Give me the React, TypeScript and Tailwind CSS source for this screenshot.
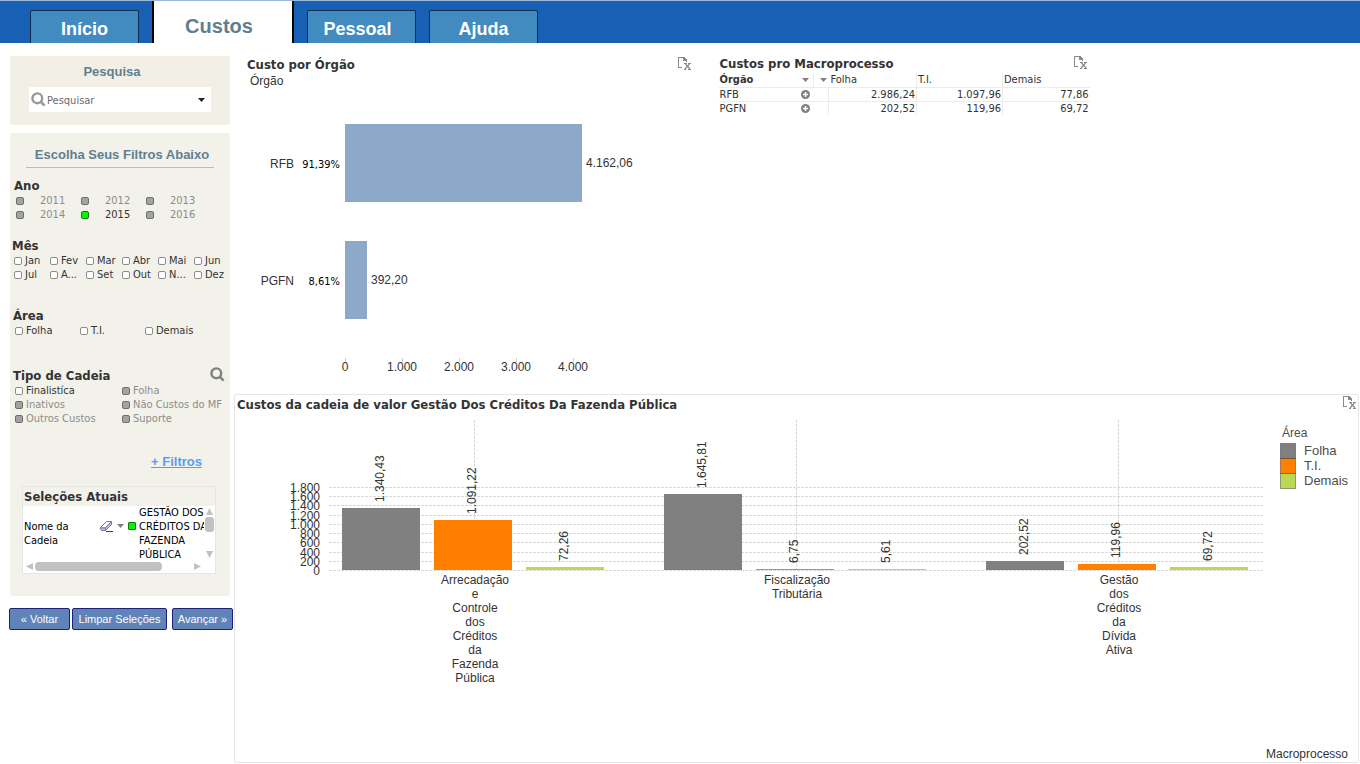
import React, { useState } from "react";

type FilterState = "free" | "selected" | "excluded";

const YEARS: { label: string; state: FilterState }[] = [
  { label: "2011", state: "excluded" },
  { label: "2012", state: "excluded" },
  { label: "2013", state: "excluded" },
  { label: "2014", state: "excluded" },
  { label: "2015", state: "selected" },
  { label: "2016", state: "excluded" },
];

const MONTHS = ["Jan", "Fev", "Mar", "Abr", "Mai", "Jun", "Jul", "A...", "Set", "Out", "N...", "Dez"];

const AREAS = ["Folha", "T.I.", "Demais"];

const CHAIN_TYPES: { label: string; state: FilterState }[] = [
  { label: "Finalistíca", state: "free" },
  { label: "Folha", state: "excluded" },
  { label: "Inativos", state: "excluded" },
  { label: "Não Custos do MF", state: "excluded" },
  { label: "Outros Custos", state: "excluded" },
  { label: "Suporte", state: "excluded" },
];

const ORGAOS = [
  { name: "RFB", percent: "91,39%", value: 4162.06, label: "4.162,06" },
  { name: "PGFN", percent: "8,61%", value: 392.2, label: "392,20" },
];

const TABLE_ROWS = [
  { name: "RFB", values: ["2.986,24", "1.097,96", "77,86"] },
  { name: "PGFN", values: ["202,52", "119,96", "69,72"] },
];

const COLORS = ["#808080", "#ff8000", "#bad854"];

const GROUPS = [
  {
    lines: ["Arrecadação", "e", "Controle", "dos", "Créditos", "da", "Fazenda", "Pública"],
    values: [1340.43, 1091.22, 72.26],
    labels: ["1.340,43", "1.091,22", "72,26"],
  },
  {
    lines: ["Fiscalização", "Tributária"],
    values: [1645.81, 6.75, 5.61],
    labels: ["1.645,81", "6,75", "5,61"],
  },
  {
    lines: ["Gestão", "dos", "Créditos", "da", "Dívida", "Ativa"],
    values: [202.52, 119.96, 69.72],
    labels: ["202,52", "119,96", "69,72"],
  },
];

const AXIS_TICKS = ["0", "200", "400", "600", "800", "1.000", "1.200", "1.400", "1.600", "1.800"];

const ExportButton: React.FC = () => (
  <button type="button" aria-label="Exportar para Excel" className="block shrink-0 pt-px">
    <svg width="15" height="14" viewBox="0 0 15 14" fill="none" stroke="#8a8a8a" shapeRendering="crispEdges">
      <path d="M4 10.5H0.5V0.5H6" />
      <path d="M5 0h2v1h1v1h1v2H5z" fill="#8a8a8a" stroke="none" />
      <path d="M8.500 4v1" />
      <path d="M6 6.500h3M10 6.500h3M6 12.500h2M10 12.500h3" />
      <path d="M7.500 7l4.500 5M11.500 7l-4.500 5" shapeRendering="auto" strokeWidth="1.2" />
    </svg>
  </button>
);

const SearchIcon: React.FC<{ color: string }> = ({ color }) => (
  <svg width="15" height="15" viewBox="0 0 15 15" fill="none" stroke={color}>
    <circle cx="6.3" cy="6.3" r="4.900" strokeWidth="2.400" />
    <path d="M9.800 9.800l3.800 3.800" strokeWidth="2.600" />
  </svg>
);

const Caret: React.FC<{ color: string }> = ({ color }) => (
  <svg width="7" height="4" viewBox="0 0 7 4" fill={color} className="shrink-0">
    <path d="M0 0h7L3.500 4z" />
  </svg>
);

const PlusIcon: React.FC = () => (
  <svg width="9" height="9" viewBox="0 0 9 9">
    <circle cx="4.500" cy="4.500" r="4.500" fill="#808080" />
    <path d="M4.500 2v5M2 4.500h5" stroke="#fff" strokeWidth="1.400" />
  </svg>
);

const Check: React.FC<{ label: string; state?: FilterState; wide?: boolean }> = ({
  label,
  state = "free",
  wide = false,
}) => {
  const [checked, setChecked] = useState(state === "selected");
  const box =
    state === "excluded"
      ? "border-[#6e6e6e] bg-[#a3a3a3]"
      : checked
        ? "border-[#157a15] bg-[#00f800]"
        : "border-[#8c8c8c] bg-white";
  return (
    <label
      className={`flex h-[14px] items-center leading-4 whitespace-nowrap ${wide ? "gap-4" : "gap-[3px]"} ${
        state === "excluded" ? "text-[#8c8c8c]" : "text-[#333]"
      }`}
    >
      <input
        type="checkbox"
        checked={checked}
        onChange={() => setChecked(!checked)}
        className={`size-2 shrink-0 appearance-none rounded-[2px] border ${box}`}
      />
      {label}
    </label>
  );
};

const Heading: React.FC<{ children: React.ReactNode }> = ({ children }) => (
  <h3 className="h-[17px] text-[13px] leading-[17px] font-bold text-[#333]">{children}</h3>
);

const CurrentSelections: React.FC = () => (
  <section className="mr-[14px] ml-3 mt-4 border border-[#e6e6e6] bg-white text-black">
    <h3 className="bg-[#f3f2ea] pl-px text-[13px] leading-[19px] font-bold text-[#333]">
      Seleções Atuais
    </h3>
    <div className="flex h-[55px]">
      <p className="w-[76px] shrink-0 pt-[14px] pl-px leading-[14px]">
        Nome da
        <br />
        Cadeia
      </p>
      <div className="flex h-10 w-10 shrink-0 items-center gap-1">
        <svg width="14" height="12" viewBox="0 0 14 12" className="shrink-0">
          <path d="M1 8L7.500 1.500h5L6.500 8z" fill="#fff" stroke="#777c94" />
          <path d="M1 8h5.500v2.500H2.500zM6.500 8l6-6.500v3l-6 6z" fill="#bccbe6" stroke="#777c94" />
          <path d="M7 11.500h7" stroke="#444" />
        </svg>
        <Caret color="#808080" />
        <span className="size-2 shrink-0 rounded-[1px] border border-[#157a15] bg-[#00f800]" />
      </div>
      <p className="min-w-0 flex-1 overflow-hidden leading-[14px] whitespace-nowrap">
        GESTÃO DOS
        <br />
        CRÉDITOS DA
        <br />
        FAZENDA
        <br />
        PÚBLICA
      </p>
      <svg width="11" height="56" viewBox="0 0 11 56" fill="#c1c1c1" className="shrink-0">
        <path d="M2 9L5.500 2L9 9zM2 45h7l-3.500 7z" />
        <rect x="1" y="11" width="9" height="15" rx="3" />
      </svg>
    </div>
    <svg width="182" height="12" viewBox="0 0 182 12" fill="#c1c1c1" className="block">
      <path d="M10 2v7L3 5.500zM171 2v7l7-3.500z" />
      <rect x="12" y="1" width="127" height="9" rx="4" />
    </svg>
  </section>
);

const Sidebar: React.FC = () => (
  <aside className="w-[234px] shrink-0 pt-[13px] pl-[10px] text-[11px]">
    <section className="mr-1 rounded-[2px] bg-[#f2efe6] px-[19px] pb-[13px]">
      <h2 className="pr-4 text-center font-['Liberation_Sans',sans-serif] text-[13px] leading-[31px] font-bold text-[#5f7f90]">
        Pesquisa
      </h2>
      <div className="flex h-[25px] items-center gap-px bg-white pr-[6px] pl-[2px]">
        <SearchIcon color="#999" />
        <input
          aria-label="Pesquisar"
          placeholder="Pesquisar"
          className="min-w-0 flex-1 bg-transparent pt-1 outline-none placeholder:text-[#6b6b6b]"
        />
        <Caret color="#222" />
      </div>
    </section>

    <section className="mt-2 mr-1 rounded-[2px] bg-[#f2f2ea] pb-[22px]">
      <h2 className="mx-4 border-b border-[#bbb] pt-[10px] pl-1 text-center font-['Liberation_Sans',sans-serif] text-[13px] leading-6 font-bold text-[#5f7f90]">
        Escolha Seus Filtros Abaixo
      </h2>

      <div className="mt-[9px] pl-1">
        <Heading>Ano</Heading>
        <div className="grid grid-cols-[repeat(3,65px)] pl-[2px]">
          {YEARS.map((y) => (
            <Check key={y.label} label={y.label} state={y.state} wide />
          ))}
        </div>
      </div>

      <div className="mt-[15px] pl-[2px]">
        <Heading>Mês</Heading>
        <div className="grid grid-cols-[repeat(6,36px)] pl-[2px]">
          {MONTHS.map((m) => (
            <Check key={m} label={m} />
          ))}
        </div>
      </div>

      <div className="mt-[25px] pl-[3px]">
        <Heading>Área</Heading>
        <div className="grid grid-cols-[repeat(3,65px)] pl-[2px]">
          {AREAS.map((a) => (
            <Check key={a} label={a} />
          ))}
        </div>
      </div>

      <div className="mt-[29px] pl-[3px]">
        <div className="flex h-[17px] items-start justify-between pr-[5px]">
          <Heading>Tipo de Cadeia</Heading>
          <button type="button" aria-label="Pesquisar tipo de cadeia">
            <SearchIcon color="#808080" />
          </button>
        </div>
        <div className="grid grid-cols-[107px_1fr] pl-[2px]">
          {CHAIN_TYPES.map((c) => (
            <Check key={c.label} label={c.label} state={c.state} />
          ))}
        </div>
      </div>

      <div className="mt-7 pr-7 text-right">
        <a
          href="#filtros"
          className="block font-['Liberation_Sans',sans-serif] text-[13px] leading-4 font-bold text-[#5b9bf5] underline"
        >
          + Filtros
        </a>
      </div>

      <CurrentSelections />
    </section>

    <div className="mt-3 -ml-px flex h-[22px] gap-[2px] font-['Liberation_Sans',sans-serif] whitespace-nowrap text-white">
      <button type="button" className="w-[61px] rounded-[2px] border border-[#1f1f7a] bg-[#6083b8]">
        « Voltar
      </button>
      <button type="button" className="w-[95px] rounded-[2px] border border-[#1f1f7a] bg-[#6083b8]">
        Limpar Seleções
      </button>
      <button type="button" className="ml-[3px] w-[61px] rounded-[2px] border border-[#1f1f7a] bg-[#6083b8]">
        Avançar »
      </button>
    </div>
  </aside>
);

const OrgaoChart: React.FC = () => (
  <svg
    viewBox="0 0 440 290"
    className="w-[440px] max-w-full font-['Liberation_Sans',sans-serif] text-[12px]"
    fill="#333"
  >
    {ORGAOS.map((o, i) => {
      const width = Math.round((o.value * 228) / 4000);
      const top = 34 + i * 117;
      return (
        <g key={o.name}>
          <text x="47" y={top + 44} textAnchor="end">
            {o.name}
          </text>
          <text
            x="93"
            y={top + 44}
            textAnchor="end"
            className="fill-black font-['DejaVu_Sans_Condensed','DejaVu_Sans',sans-serif] text-[11px]"
          >
            {o.percent}
          </text>
          <rect x="98" y={top} width={width} height="78" fill="#8da9ca" />
          <text x={98 + width + 4} y={top + 43}>
            {o.label}
          </text>
        </g>
      );
    })}
    {["0", "1.000", "2.000", "3.000", "4.000"].map((t, i) => (
      <g key={t}>
        <rect x={98 + i * 57} y="268" width="1" height="4" fill="#ccc" />
        <text x={98 + i * 57} y="281" textAnchor="middle">
          {t}
        </text>
      </g>
    ))}
  </svg>
);

const MacroTable: React.FC = () => (
  <table className="w-[371px] border-collapse text-[11px] leading-[13px] text-[#333]">
    <thead>
      <tr>
        <th className="h-[14px] w-[95px] border-r border-b border-[#ececec] pl-px text-left font-bold">
          <span className="flex items-center justify-between pr-1">
            Órgão
            <Caret color="#808080" />
          </span>
        </th>
        <th className="w-[15px] border-b border-[#ececec]">
          <span className="flex justify-end pr-[2px]">
            <Caret color="#808080" />
          </span>
        </th>
        <th className="w-[88px] border-r border-b border-[#ececec] pl-[2px] text-left font-normal">Folha</th>
        <th className="w-[86px] border-r border-b border-[#ececec] pl-[1px] text-left font-normal">T.I.</th>
        <th className="border-b border-[#ececec] pl-[1px] text-left font-normal">Demais</th>
      </tr>
    </thead>
    <tbody>
      {TABLE_ROWS.map((row) => (
        <tr key={row.name} className="border-b border-[#ececec] last:border-b-0">
          <td className="h-[14px] pl-px">
            <span className="flex items-center justify-between pr-1">
              {row.name}
              <button type="button" aria-label={`Expandir ${row.name}`}>
                <PlusIcon />
              </button>
            </span>
          </td>
          <td className="border-r border-[#ececec]" />
          {row.values.map((v) => (
            <td key={v} className="border-r border-[#ececec] pr-px text-right last:border-r-0">
              {v}
            </td>
          ))}
        </tr>
      ))}
    </tbody>
  </table>
);

const gridY = (i: number) => 156 - Math.round((i * 83) / 9);

const MacroChart: React.FC = () => (
  <svg
    viewBox="0 0 1123 348"
    className="block w-full font-['Liberation_Sans',sans-serif] text-[12px]"
    fill="#333"
  >
    <g stroke="#d9d9d9" strokeDasharray="3 1" shapeRendering="crispEdges">
      {AXIS_TICKS.map((t, i) => (
        <line key={t} x1="94" x2="1028" y1={gridY(i) + 0.5} y2={gridY(i) + 0.5} />
      ))}
      {GROUPS.map((g, i) => (
        <line key={g.lines[0]} x1={239.5 + i * 322} x2={239.5 + i * 322} y1="6" y2="156" />
      ))}
    </g>

    {AXIS_TICKS.map((t, i) => (
      <text key={t} x="85" y={gridY(i) + 5} textAnchor="end">
        {t}
      </text>
    ))}

    {GROUPS.map((g, gi) => (
      <g key={g.lines[0]}>
        {g.values.map((v, i) => {
          const height = Math.max(1, Math.round((v * 83) / 1800));
          const x = 107 + gi * 322 + i * 92;
          const top = 156 - height;
          return (
            <g key={g.labels[i]}>
              <rect x={x} y={top} width="78" height={height} fill={COLORS[i]} shapeRendering="crispEdges" />
              <text transform={`translate(${x + 42} ${top - 6}) rotate(-90)`}>{g.labels[i]}</text>
            </g>
          );
        })}
        {g.lines.map((line, i) => (
          <text key={line} x={240 + gi * 322} y={170 + i * 14} textAnchor="middle">
            {line}
          </text>
        ))}
      </g>
    ))}

    <g fill="#4d4d4d">
      <text x="1047" y="23">
        Área
      </text>
      {AREAS.map((a, i) => (
        <g key={a}>
          <rect
            x="1045.5"
            y={29.5 + i * 15}
            width="15"
            height="15"
            fill={COLORS[i]}
            stroke="#000"
            strokeOpacity="0.35"
          />
          <text x="1069" y={41 + i * 15} className="text-[13px]">
            {a}
          </text>
        </g>
      ))}
    </g>
    <text x="1113" y="344" textAnchor="end">
      Macroprocesso
    </text>
  </svg>
);

const App: React.FC = () => {
  return (
    <div className="min-h-screen bg-white font-['DejaVu_Sans_Condensed','DejaVu_Sans',sans-serif]">
      <header className="h-[43px] border-t border-[#9db8d6] bg-[#1760b3] pl-[30px]">
        <nav className="flex h-full items-end gap-[13px] font-['Liberation_Sans',sans-serif] text-[18px] font-bold text-white">
          <a
            href="#inicio"
            className="flex h-[33px] w-[109px] items-center justify-center rounded-t-[2px] border border-b-0 border-[#0f2f50] bg-[#428bc1] pt-1"
          >
            Início
          </a>
          <a
            href="#custos"
            className="flex h-[42px] w-[142px] items-center justify-center border-x-2 border-black bg-white pt-2 pr-2 text-[20px] text-[#5f7f90]"
          >
            Custos
          </a>
          <a
            href="#pessoal"
            className="flex h-[33px] w-[109px] items-center justify-center rounded-t-[2px] border border-b-0 border-[#0f2f50] bg-[#428bc1] pt-1 pr-2"
          >
            Pessoal
          </a>
          <a
            href="#ajuda"
            className="flex h-[33px] w-[109px] items-center justify-center rounded-t-[2px] border border-b-0 border-[#0f2f50] bg-[#428bc1] pt-1"
          >
            Ajuda
          </a>
        </nav>
      </header>

      <div className="flex">
        <Sidebar />

        <main className="min-w-0 flex-1 pr-px">
          <div className="grid min-h-[351px] grid-cols-[42%_1fr]">
            <section className="pt-[13px] pr-[14px] pl-[13px]">
              <div className="flex items-start justify-between">
                <h2 className="text-[13px] leading-[18px] font-bold text-[#333]">Custo por Órgão</h2>
                <ExportButton />
              </div>
              <p className="h-4 pl-[3px] font-['Liberation_Sans',sans-serif] text-[12px] leading-[14px] text-[#333]">
                Órgão
              </p>
              <OrgaoChart />
            </section>

            <section className="pt-3 pl-3">
              <div className="flex h-[18px] w-[370px] items-start justify-between pl-px">
                <h2 className="text-[13px] leading-[18px] font-bold text-[#333]">Custos pro Macroprocesso</h2>
                <ExportButton />
              </div>
              <MacroTable />
            </section>
          </div>

          <section className="rounded-[2px] border border-[#e6e6e6]">
            <div className="flex h-[19px] items-start justify-between pl-[2px]">
              <h2 className="text-[13px] leading-[19px] font-bold text-[#333]">
                Custos da cadeia de valor Gestão Dos Créditos Da Fazenda Pública
              </h2>
              <ExportButton />
            </div>
            <MacroChart />
          </section>
        </main>
      </div>
    </div>
  );
};

export default App;
